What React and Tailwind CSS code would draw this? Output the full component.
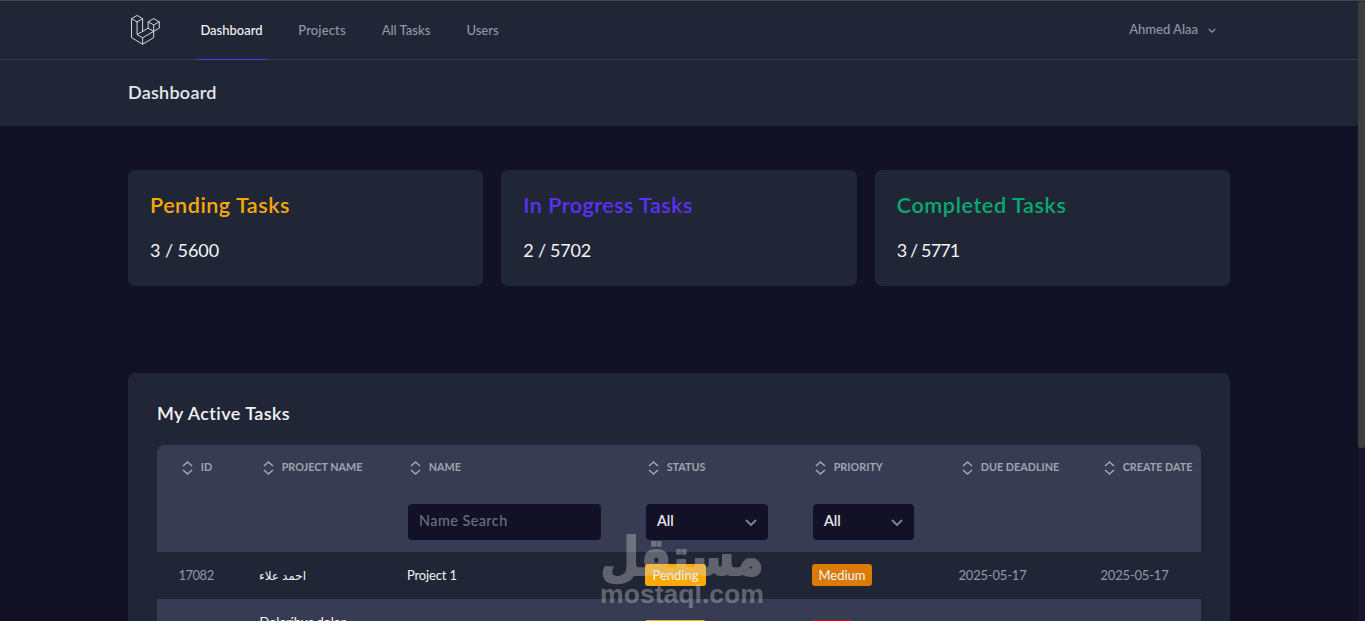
import React, { useState } from "react";

const navLinks = [
    { label: "Dashboard", className: "w-[69px] text-[#f3f4f6] border-[#5b35e8]" },
    { label: "Projects", className: "w-[56px] text-[#9397a8] border-transparent tracking-[0.15px]" },
    { label: "All Tasks", className: "w-[56px] text-[#9397a8] border-transparent" },
    { label: "Users", className: "w-[41px] text-[#9397a8] border-transparent" },
];

const stats = [
    {
        title: "Pending Tasks",
        value: "3 / 5600",
        titleClass: "text-[#fba905] tracking-[0.5px]",
        valueClass: "tracking-[-0.05px]",
    },
    {
        title: "In Progress Tasks",
        value: "2 / 5702",
        titleClass: "text-[#5a32fa] tracking-[0.45px]",
        valueClass: "tracking-[-0.25px]",
    },
    {
        title: "Completed Tasks",
        value: "3 / 5771",
        titleClass: "text-[#04ab6e] tracking-[0.6px]",
        valueClass: "tracking-[-0.85px]",
    },
];

const columns = [
    "ID",
    "PROJECT NAME",
    "NAME",
    "STATUS",
    "PRIORITY",
    "DUE DEADLINE",
    "CREATE DATE",
];

const tableGrid =
    "grid grid-cols-[81px_147px_238px_167px_147px_142px_122px]";

function ApplicationLogo() {
    return (
        <svg
            viewBox="0 0 50 52"
            className="w-[29px] h-[30px]"
            fill="none"
            stroke="#e5e7eb"
            strokeWidth="1.6"
            strokeLinejoin="round"
        >
            <path d="M.8 6.3 10.4.8 20 6.3 10.4 11.9ZM.8 6.3v32.9L20 50.7l19.2-11.5V28.3M10.4 11.9v22L20 39.5v11.2M20 6.3v22.1M10.4 33.9l19.2-11.1M20 39.5l19.2-11.2" />
            <path d="m29.6 11.8 9.6-5.5 9.7 5.5-9.7 5.5ZM29.6 11.8v11l9.6 5.5 9.7-5.5v-11M39.2 17.3v11" />
        </svg>
    );
}

function Chevron({ className }) {
    return (
        <svg viewBox="0 0 12 7" className={className} fill="none" stroke="currentColor">
            <path d="m1 1 5 5 5-5" strokeWidth="1.9" />
        </svg>
    );
}

function SortIcon() {
    return (
        <svg
            viewBox="0 0 11 14"
            className="w-[11px] h-[14px] mt-[3px] shrink-0"
            fill="none"
            stroke="#a5a8b4"
            strokeWidth="1.5"
        >
            <path d="m1 5 4.5-4L10 5M1 9l4.5 4L10 9" />
        </svg>
    );
}

function SelectFilter({ className }) {
    return (
        <button
            type="button"
            className={`flex items-center justify-between h-9 rounded bg-[#131126] pl-[11px] pr-[11px] text-[14.4px] font-semibold text-[#e5e7eb] ${className}`}
        >
            <span className="pb-[2px]">All</span>
            <Chevron className="w-[12px] h-[7px] text-[#7f8290]" />
        </button>
    );
}

function Badge({ children, className }) {
    return (
        <span
            className={`block h-[22px] rounded-[3px] text-center text-[13px] leading-[22px] text-[#f3f4f6] ${className}`}
        >
            {children}
        </span>
    );
}

function Watermark() {
    return (
        <div className="absolute left-[600px] top-[528px] w-[164px] h-[84px] overflow-hidden text-[#d6d6d6] opacity-35 pointer-events-none">
            <svg viewBox="0 0 164 84" className="w-full h-full" fill="currentColor">
                <text
                    x="82"
                    y="47"
                    textAnchor="middle"
                    direction="rtl"
                    textLength="163"
                    lengthAdjust="spacingAndGlyphs"
                    stroke="currentColor"
                    strokeWidth="2"
                    strokeLinejoin="round"
                    className="font-['DejaVu_Sans',sans-serif] font-bold text-[52px]"
                >
                    مستقل
                </text>
                <text
                    x="0"
                    y="75"
                    textLength="164"
                    lengthAdjust="spacingAndGlyphs"
                    className="font-['Liberation_Sans',sans-serif] font-bold text-[26px]"
                >
                    mostaql.com
                </text>
            </svg>
        </div>
    );
}

export default function Dashboard() {
    const [name, setName] = useState("");

    return (
        <div className="relative flex w-full h-[621px] overflow-hidden bg-[#131126] font-['Lato',sans-serif] [font-variant-ligatures:none]">
            <div className="flex-1 min-w-0 border-t border-[#454548]">
                <nav className="h-[59px] bg-[#212637] border-b border-[#383b4e] px-[128px]">
                    <div className="flex justify-between h-full">
                        <div className="flex h-full">
                            <div className="pt-[14px] pl-[3px] w-[69px]">
                                <ApplicationLogo />
                            </div>
                            <div className="flex gap-[28px] -mb-px">
                                {navLinks.map((link) => (
                                    <a
                                        key={link.label}
                                        href="#"
                                        className={`flex items-center justify-center h-[59px] border-b pt-px text-[13px] font-medium whitespace-nowrap ${link.className}`}
                                    >
                                        {link.label}
                                    </a>
                                ))}
                            </div>
                        </div>
                        <button
                            type="button"
                            className="flex items-center gap-[10px] pr-[14px] text-[13px] font-medium text-[#9397a8]"
                        >
                            <span>Ahmed Alaa</span>
                            <Chevron className="w-[8px] h-[5px]" />
                        </button>
                    </div>
                </nav>

                <header className="h-[66px] bg-[#212637] px-[128px] flex items-center">
                    <h2 className="-mt-[2px] text-[18px] leading-6 font-semibold tracking-[0.25px] text-[#e5e7eb]">
                        Dashboard
                    </h2>
                </header>

                <main className="px-[128px] pt-[44px]">
                    <div className="grid grid-cols-3 gap-[18px]">
                        {stats.map((stat) => (
                            <div
                                key={stat.title}
                                className="h-[116px] rounded-[7px] bg-[#212637] px-[22px] pt-[21px]"
                            >
                                <h3
                                    className={`text-[21.6px] leading-[29px] font-semibold ${stat.titleClass}`}
                                >
                                    {stat.title}
                                </h3>
                                <p
                                    className={`mt-[17px] text-[18px] leading-[26px] text-[#f3f4f6] ${stat.valueClass}`}
                                >
                                    {stat.value}
                                </p>
                            </div>
                        ))}
                    </div>

                    <section className="mt-[87px] h-[400px] rounded-[7px] bg-[#212637] px-[29px] pt-[28px]">
                        <h3 className="text-[18px] leading-6 font-semibold tracking-[0.42px] text-[#f3f4f6]">
                            My Active Tasks
                        </h3>

                        <div className="mt-[20px] rounded-t-[7px] overflow-hidden text-[13px] text-[#9397a8]">
                            <div className="h-[107px] bg-[#383c52]">
                                <div className={`${tableGrid} h-[59px] pt-[13px]`}>
                                    {columns.map((column) => (
                                        <div
                                            key={column}
                                            className="flex gap-[7.4px] pl-[25.3px] text-[10.8px] leading-[18px] font-bold text-[#a0a3b0] whitespace-nowrap"
                                        >
                                            <SortIcon />
                                            {column}
                                        </div>
                                    ))}
                                </div>
                                <div className={tableGrid}>
                                    <div />
                                    <div />
                                    <div className="pl-[23px]">
                                        <input
                                            type="text"
                                            value={name}
                                            placeholder="Name Search"
                                            onChange={(e) => setName(e.target.value)}
                                            className="block w-[193px] h-9 rounded bg-[#131126] px-[11px] pb-[3px] text-[14.4px] font-medium tracking-[0.45px] placeholder:text-[#6b7080] focus:outline-none"
                                        />
                                    </div>
                                    <div className="pl-[23px]">
                                        <SelectFilter className="w-[122px]" />
                                    </div>
                                    <div className="pl-[23px]">
                                        <SelectFilter className="w-[101px]" />
                                    </div>
                                </div>
                            </div>

                            <div className={`${tableGrid} h-[47px] items-center`}>
                                <div className="pl-[21.5px] tracking-[-0.5px]">17082</div>
                                <div className="pl-[21px] text-[12px] text-[#f3f4f6] font-['Lato','DejaVu_Sans',sans-serif]">
                                    احمد علاء
                                </div>
                                <div className="pl-[22px] tracking-[-0.15px] text-[#f3f4f6]">
                                    Project 1
                                </div>
                                <div className="pl-[22px] -mt-[2px]">
                                    <Badge className="w-[61px] bg-[#fba905]">Pending</Badge>
                                </div>
                                <div className="pl-[22px] -mt-[2px]">
                                    <Badge className="w-[60px] bg-[#dc7b04]">Medium</Badge>
                                </div>
                                <div className="pl-[21.5px] tracking-[-0.2px]">2025-05-17</div>
                                <div className="pl-[21.5px] tracking-[-0.2px]">2025-05-17</div>
                            </div>

                            <div className={`${tableGrid} h-[66px] bg-[#383c52] pt-[14px]`}>
                                <div />
                                <div className="pl-[21.5px] tracking-[-0.2px] text-[#f3f4f6] leading-[18px]">
                                    Doloribus dolor
                                </div>
                                <div />
                                <div className="pl-[22px] pt-[7px]">
                                    <Badge className="w-[61px] bg-[#fba905]">Pending</Badge>
                                </div>
                                <div className="pl-[22px] pt-[7px]">
                                    <Badge className="w-[41px] bg-[#e7000b]">High</Badge>
                                </div>
                            </div>
                        </div>
                    </section>
                </main>
            </div>

            {/* スクロールバー */}
            <div className="w-[7px] h-full bg-[#161530] border-t border-[#454548]">
                <div className="h-[447px] rounded-[3px] bg-[#3d3e40]" />
            </div>

            <Watermark />
        </div>
    );
}
